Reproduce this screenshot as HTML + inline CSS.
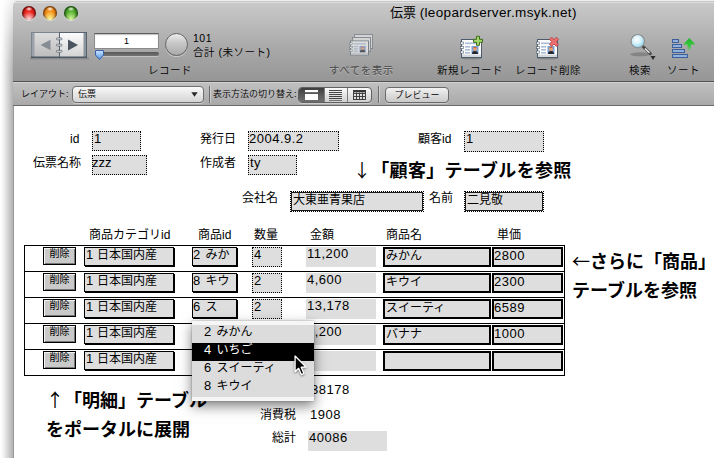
<!DOCTYPE html>
<html lang="ja">
<head>
<meta charset="utf-8">
<title>伝票 (leopardserver.msyk.net)</title>
<style>
html,body{margin:0;padding:0;}
body{width:714px;height:458px;overflow:hidden;background:#fff;position:relative;
  font-family:"Liberation Sans","Noto Sans CJK JP",sans-serif;color:#000;}
.a{position:absolute;white-space:nowrap;}
/* window shadow on left */
#shadowL{left:0;top:0;width:14px;height:458px;
  background:linear-gradient(to right,#ffffff 0%,#fafafa 15%,#e4e4e4 40%,#cdcdcd 65%,#b3b3b3 90%,#a2a2a2 100%);}
#win{left:13px;top:1px;width:720px;height:470px;border-radius:5px 0 0 0;background:#fff;overflow:hidden;}
#tbar{left:0;top:0;width:720px;height:80px;
  background:linear-gradient(to bottom,#c9c9c9 0%,#bcbcbc 25%,#a8a8a8 60%,#969696 100%);
  border-top:1px solid #c6c6c6;box-shadow:inset 0 1px 0 #dedede;box-sizing:border-box;}
#tline{left:0;top:80px;width:720px;height:1px;background:#515151;}
#lbar{left:0;top:81px;width:720px;height:23px;
  background:linear-gradient(to bottom,#c0c0c0 0%,#a9a9a9 100%);border-top:1px solid #d2d2d2;box-sizing:border-box;}
#lline{left:0;top:104px;width:720px;height:1px;background:#6a6a6a;}
#winL{left:13px;top:106px;width:1px;height:352px;background:#9a9a9a;}
#shadowT{left:0;top:0;width:14px;height:70px;background:linear-gradient(to bottom,rgba(255,255,255,.85) 0%,rgba(255,255,255,.6) 25%,rgba(255,255,255,.3) 55%,rgba(255,255,255,0) 100%);}
.tl{width:14px;height:14px;border-radius:50%;top:6px;box-sizing:border-box;}
.ui{font-size:10.5px;line-height:14px;letter-spacing:0.5px;font-weight:350;}
.lab{font-size:12px;line-height:16px;}
.fld{box-sizing:border-box;background:#dedede;font-size:13px;line-height:14px;overflow:hidden;letter-spacing:0.5px;}
.jp{font-size:12px;letter-spacing:0;word-spacing:2px;line-height:13px;}
.jp b{font-weight:normal;font-size:13px;}
.dot{border:1px dotted #000;}
.thk{border:2px solid #000;padding:1px 0 0 1px;}
.thd{border:1px solid #1a1a1a;outline:1px dotted #000;margin:1px;padding:1px 0 0 1px;}
.shd{border:1px solid #000;box-shadow:1px 1px 0 #000;}
.ar{font-weight:normal;font-family:"Noto Sans CJK JP",sans-serif;}
.big{font-size:18px;line-height:24px;font-weight:bold;}
.btn{box-sizing:border-box;background:#c9c9c9;border:1px solid #000;font-size:10px;line-height:11px;text-align:center;
  box-shadow:inset 1px 1px 0 #f4f4f4,inset -1px -1px 0 #777;}
.row{left:24px;width:541px;height:27px;box-sizing:border-box;border:1px solid #000;}
</style>
</head>
<body>
<div class="a" style="left:13px;top:0;width:8px;height:8px;background:#e9e9e9;"></div>
<div class="a" style="left:18px;top:0;width:696px;height:1px;background:#efefef;"></div>
<div class="a" id="shadowL"></div>
<div class="a" id="shadowT"></div>
<div class="a" id="win">
  <div class="a" id="tbar"></div>
  <div class="a" id="tline"></div>
  <div class="a" id="lbar"></div>
  <div class="a" id="lline"></div>
</div>
<div class="a" id="winL"></div>

<!-- traffic lights -->
<div class="a tl" style="left:22px;background:radial-gradient(ellipse 24% 15% at 50% 21%,rgba(255,255,255,0.95),rgba(255,255,255,0)),radial-gradient(ellipse 55% 50% at 50% 92%,#ffc8c8 0%,#ffc8c8 12%,rgba(255,170,170,0) 100%),radial-gradient(circle closest-side at 50% 50%,#f6352f 0%,#e3221e 58%,#8d0f0c 86%,#4e0604 100%);box-shadow:0 1px 0 rgba(255,255,255,.5);"></div>
<div class="a tl" style="left:43px;background:radial-gradient(ellipse 24% 15% at 50% 21%,rgba(255,255,255,0.95),rgba(255,255,255,0)),radial-gradient(ellipse 55% 50% at 50% 92%,#fff28c 0%,#fff28c 12%,rgba(255,230,120,0) 100%),radial-gradient(circle closest-side at 50% 50%,#f8a32a 0%,#ee8d1a 58%,#9a4f0a 86%,#5a2c04 100%);box-shadow:0 1px 0 rgba(255,255,255,.5);"></div>
<div class="a tl" style="left:64px;background:radial-gradient(ellipse 24% 15% at 50% 21%,rgba(255,255,255,0.9),rgba(255,255,255,0)),radial-gradient(ellipse 55% 50% at 50% 92%,#ccf290 0%,#ccf290 12%,rgba(190,240,130,0) 100%),radial-gradient(circle closest-side at 50% 50%,#6bbf43 0%,#52a52e 58%,#246612 86%,#0f3a06 100%);box-shadow:0 1px 0 rgba(255,255,255,.5);"></div>

<!-- title -->
<div class="a" style="left:390px;top:4px;font-size:13px;line-height:18px;">伝票 <span style="font-size:13.5px;letter-spacing:0.36px;">(leopardserver.msyk.net)</span></div>


<!-- book nav -->
<svg class="a" style="left:30px;top:31px" width="59" height="30" viewBox="0 0 59 30">
  <defs>
    <linearGradient id="pgL" x1="0" y1="0" x2="0" y2="1"><stop offset="0" stop-color="#dedede"/><stop offset="1" stop-color="#bcbcbc"/></linearGradient>
    <linearGradient id="pgR" x1="0" y1="0" x2="0" y2="1"><stop offset="0" stop-color="#fdfdfd"/><stop offset="1" stop-color="#d2d2d2"/></linearGradient>
  </defs>
  <rect x="0" y="26.5" width="59" height="2" fill="#555" opacity="0.3"/>
  <rect x="1.5" y="1.5" width="28" height="25" fill="url(#pgL)" stroke="#7d858d" stroke-width="1"/>
  <rect x="29.5" y="1.5" width="27" height="25" fill="url(#pgR)" stroke="#56626e" stroke-width="1"/>
  <rect x="2" y="2" width="2.5" height="24" fill="#9aa1a8"/>
  <rect x="53.5" y="2" width="2.5" height="24" fill="#8b949d"/>
  <rect x="1" y="25.5" width="56" height="1.5" fill="#4c5965"/>
  <path d="M10.5 14 L20.5 8.8 L20.5 19.2 Z" fill="#858c93"/>
  <path d="M48 14 L38 8.5 L38 19.5 Z" fill="#4a5560"/>
  <rect x="26.5" y="7" width="5.5" height="1.8" rx="0.6" fill="#f0f0f0" stroke="#4d5862" stroke-width="0.7"/>
  <rect x="26.5" y="13.2" width="5.5" height="1.8" rx="0.6" fill="#f0f0f0" stroke="#4d5862" stroke-width="0.7"/>
  <rect x="26.5" y="19.4" width="5.5" height="1.8" rx="0.6" fill="#f0f0f0" stroke="#4d5862" stroke-width="0.7"/>
</svg>

<!-- record number field -->
<div class="a" style="left:94px;top:33px;width:65px;height:16px;box-sizing:border-box;background:#fff;border:1px solid #8b8b8b;border-top-color:#5e5e5e;box-shadow:inset 0 1px 1px rgba(0,0,0,.25);font-size:9px;font-weight:350;line-height:14px;text-align:center;">1</div>
<!-- slider -->
<div class="a" style="left:98px;top:52px;width:61px;height:4px;border-radius:2px;background:linear-gradient(to bottom,#585858,#747474);box-shadow:0 1px 0 rgba(255,255,255,.35);"></div>
<svg class="a" style="left:94px;top:49px" width="11" height="12" viewBox="0 0 11 12">
  <defs><linearGradient id="thb" x1="0" y1="0" x2="0" y2="1"><stop offset="0" stop-color="#cfe6ff"/><stop offset="1" stop-color="#4f96ea"/></linearGradient></defs>
  <path d="M1.5 1.5 H9.5 V6 L5.5 10.5 L1.5 6 Z" fill="url(#thb)" stroke="#3b5fa8" stroke-width="1" stroke-linejoin="round"/>
</svg>
<!-- circle -->
<div class="a" style="left:165px;top:33px;width:23px;height:23px;border-radius:50%;box-sizing:border-box;border:1px solid #636363;background:linear-gradient(to bottom,#ededed 0%,#c9c9c9 40%,#aaaaaa 100%);box-shadow:0 1px 0 rgba(255,255,255,.4);"></div>
<div class="a ui" style="left:193px;top:31px;">101</div>
<div class="a ui" style="left:193px;top:45px;">合計 (未ソート)</div>
<div class="a ui" style="left:148px;top:63px;">レコード</div>

<div class="a ui" style="left:329px;top:63px;color:#484848;font-weight:400;text-shadow:0 1px 0 rgba(255,255,255,.3);">すべてを表示</div>
<div class="a ui" style="left:437px;top:63px;">新規レコード</div>
<div class="a ui" style="left:515px;top:63px;">レコード削除</div>
<div class="a ui" style="left:629px;top:63px;">検索</div>
<div class="a ui" style="left:667px;top:63px;">ソート</div>


<!-- layout bar -->
<div class="a" style="left:21px;top:88px;font-size:9px;font-weight:350;line-height:13px;">レイアウト:</div>
<div class="a" style="left:72px;top:86px;width:132px;height:17px;box-sizing:border-box;border:1px solid #6f6f6f;border-radius:4px;background:linear-gradient(to bottom,#fafafa 0%,#e6e6e6 50%,#d4d4d4 100%);box-shadow:0 1px 0 rgba(255,255,255,.4);font-size:9px;font-weight:350;line-height:15px;padding-left:5px;">伝票</div>
<svg class="a" style="left:191px;top:92px" width="7" height="5" viewBox="0 0 7 5"><path d="M0.3 0.3 H6.7 L3.5 4.8 Z" fill="#2a2a2a"/></svg>
<div class="a" style="left:209px;top:86px;width:1px;height:17px;background:#6c6c6c;box-shadow:1px 0 0 rgba(255,255,255,.35);"></div>
<div class="a" style="left:213px;top:88px;font-size:9px;font-weight:350;line-height:13px;">表示方法の切り替え:</div>
<div class="a" style="left:298px;top:87px;width:74px;height:16px;box-sizing:border-box;border:1px solid #5f5f5f;border-radius:4px;background:linear-gradient(to bottom,#fbfbfb 0%,#e4e4e4 50%,#d0d0d0 100%);box-shadow:0 1px 0 rgba(255,255,255,.4);overflow:hidden;">
  <div class="a" style="left:0;top:0;width:25px;height:14px;background:linear-gradient(to bottom,#3c3c3c 0%,#5e5e5e 60%,#6e6e6e 100%);"></div>
  <div class="a" style="left:25px;top:0;width:1px;height:14px;background:#7c7c7c;"></div>
  <div class="a" style="left:48px;top:0;width:1px;height:14px;background:#7c7c7c;"></div>
</div>
<svg class="a" style="left:298px;top:87px" width="74" height="16" viewBox="0 0 74 16">
  <rect x="7" y="3" width="13" height="10" fill="#fff"/>
  <rect x="7" y="5.4" width="13" height="1.3" fill="#111"/>
  <g fill="#333"><rect x="31" y="3" width="13" height="0.9"/><rect x="31" y="5" width="13" height="0.9"/><rect x="31" y="7" width="13" height="0.9"/><rect x="31" y="9" width="13" height="0.9"/><rect x="31" y="11" width="13" height="0.9"/><rect x="31" y="13" width="13" height="0.6"/></g>
  <g fill="none" stroke="#333" stroke-width="0.9"><rect x="55.5" y="3.5" width="12" height="9"/><path d="M55.5 6.5 H67.5 M55.5 9.5 H67.5 M58.5 5.5 V12.5 M61.5 5.5 V12.5 M64.5 5.5 V12.5"/></g>
  <rect x="55.5" y="3.5" width="12" height="1.8" fill="#333"/>
</svg>
<div class="a" style="left:378px;top:86px;width:1px;height:17px;background:#6c6c6c;box-shadow:1px 0 0 rgba(255,255,255,.35);"></div>
<div class="a" style="left:385px;top:87px;width:64px;height:16px;box-sizing:border-box;border:1px solid #6a6a6a;border-radius:4px;background:linear-gradient(to bottom,#f2f2f2 0%,#dcdcdc 50%,#cacaca 100%);box-shadow:0 1px 0 rgba(255,255,255,.4);font-size:9px;font-weight:350;line-height:14px;text-align:center;">プレビュー</div>


<!-- content labels/fields -->
<div class="a lab" style="left:70px;top:131px;">id</div>
<div class="a fld dot" style="left:92px;top:131px;width:49px;height:20px;padding-left:1px;">1</div>
<div class="a lab" style="left:33px;top:155px;">伝票名称</div>
<div class="a fld dot" style="left:92px;top:155px;width:55px;height:20px;padding-left:0;text-indent:-1px;letter-spacing:0;">zzz</div>

<div class="a lab" style="left:200px;top:131px;">発行日</div>
<div class="a fld dot" style="left:248px;top:131px;width:91px;height:20px;padding-left:0;">2004.9.2</div>
<div class="a lab" style="left:200px;top:155px;">作成者</div>
<div class="a fld dot" style="left:248px;top:155px;width:49px;height:20px;padding-left:1px;">ty</div>

<div class="a lab" style="left:418px;top:131px;">顧客id</div>
<div class="a fld dot" style="left:464px;top:131px;width:80px;height:21px;padding-left:1px;">1</div>

<div class="a big" style="left:353px;top:157px;letter-spacing:0.3px;"><span class="ar">↓</span>「顧客」テーブルを参照</div>

<div class="a lab" style="left:242px;top:190px;">会社名</div>
<div class="a fld thd jp" style="left:290px;top:191px;width:132px;height:19px;">大東亜青果店</div>
<div class="a lab" style="left:429px;top:190px;">名前</div>
<div class="a fld thd jp" style="left:464px;top:191px;width:78px;height:19px;">二見敬</div>

<div class="a lab" style="left:89px;top:227px;">商品カテゴリid</div>
<div class="a lab" style="left:198px;top:227px;">商品id</div>
<div class="a lab" style="left:254px;top:227px;">数量</div>
<div class="a lab" style="left:310px;top:227px;">金額</div>
<div class="a lab" style="left:386px;top:227px;">商品名</div>
<div class="a lab" style="left:497px;top:227px;">単価</div>

<div class="a row" style="top:245px;"></div>
<div class="a btn" style="left:43px;top:247px;width:33px;height:18px;">削除</div>
<div class="a fld shd jp" style="left:84px;top:247px;width:90px;height:19px;padding-left:1px;word-spacing:0.5px;"><b>1</b> 日本国内産</div>
<div class="a fld shd jp" style="left:192px;top:247px;width:45px;height:19px;padding-left:0px;"><b>2</b> みか</div>
<div class="a fld dot" style="left:252px;top:247px;width:30px;height:20px;padding-left:1px;">4</div>
<div class="a fld" style="left:306px;top:247px;width:70px;height:20px;padding-left:1px;">11,200</div>
<div class="a fld thk jp" style="left:383px;top:247px;width:108px;height:20px;">みかん</div>
<div class="a fld thk" style="left:492px;top:247px;width:71px;height:20px;padding:0;">2800</div>
<div class="a row" style="top:271px;"></div>
<div class="a btn" style="left:43px;top:273px;width:33px;height:18px;">削除</div>
<div class="a fld shd jp" style="left:84px;top:273px;width:90px;height:19px;padding-left:1px;word-spacing:0.5px;"><b>1</b> 日本国内産</div>
<div class="a fld shd jp" style="left:192px;top:273px;width:45px;height:19px;padding-left:0px;"><b>8</b> キウ</div>
<div class="a fld dot" style="left:252px;top:273px;width:30px;height:20px;padding-left:1px;">2</div>
<div class="a fld" style="left:306px;top:273px;width:70px;height:20px;padding-left:1px;">4,600</div>
<div class="a fld thk jp" style="left:383px;top:273px;width:108px;height:20px;">キウイ</div>
<div class="a fld thk" style="left:492px;top:273px;width:71px;height:20px;padding:0;">2300</div>
<div class="a row" style="top:297px;"></div>
<div class="a btn" style="left:43px;top:299px;width:33px;height:18px;">削除</div>
<div class="a fld shd jp" style="left:84px;top:299px;width:90px;height:19px;padding-left:1px;word-spacing:0.5px;"><b>1</b> 日本国内産</div>
<div class="a fld shd jp" style="left:192px;top:299px;width:45px;height:19px;padding-left:0px;"><b>6</b> ス</div>
<div class="a fld dot" style="left:252px;top:299px;width:30px;height:20px;padding-left:1px;">2</div>
<div class="a fld" style="left:306px;top:299px;width:70px;height:20px;padding-left:1px;">13,178</div>
<div class="a fld thk jp" style="left:383px;top:299px;width:108px;height:20px;">スイーティ</div>
<div class="a fld thk" style="left:492px;top:299px;width:71px;height:20px;padding:0;">6589</div>
<div class="a row" style="top:323px;"></div>
<div class="a btn" style="left:43px;top:325px;width:33px;height:18px;">削除</div>
<div class="a fld shd jp" style="left:84px;top:325px;width:90px;height:19px;padding-left:1px;word-spacing:0.5px;"><b>1</b> 日本国内産</div>
<div class="a fld" style="left:306px;top:325px;width:70px;height:20px;padding-left:1px;">1,200</div>
<div class="a fld thk jp" style="left:383px;top:325px;width:108px;height:20px;">バナナ</div>
<div class="a fld thk" style="left:492px;top:325px;width:71px;height:20px;padding:0;">1000</div>
<div class="a row" style="top:349px;"></div>
<div class="a btn" style="left:43px;top:351px;width:33px;height:18px;">削除</div>
<div class="a fld shd jp" style="left:84px;top:351px;width:90px;height:19px;padding-left:1px;word-spacing:0.5px;"><b>1</b> 日本国内産</div>
<div class="a fld" style="left:306px;top:351px;width:70px;height:20px;padding-left:1px;"></div>
<div class="a fld thk jp" style="left:383px;top:351px;width:108px;height:20px;"></div>
<div class="a fld thk" style="left:492px;top:351px;width:71px;height:20px;padding:0;"></div>


<div class="a big" style="left:572px;top:248px;"><span class="ar">←</span>さらに「商品」</div>
<div class="a big" style="left:572px;top:279px;">テーブルを参照</div>
<div class="a big" style="left:46px;top:387px;"><span class="ar">↑</span>「明細」テーブル</div>
<div class="a big" style="left:46px;top:418px;">をポータルに展開</div>

<div class="a fld" style="left:310px;top:383px;width:70px;height:18px;background:none;padding-left:1px;">38178</div>
<div class="a lab" style="left:260px;top:407px;">消費税</div>
<div class="a fld" style="left:309px;top:408px;width:70px;height:18px;background:none;padding-left:1px;">1908</div>
<div class="a lab" style="left:272px;top:430px;">総計</div>
<div class="a fld" style="left:308px;top:431px;width:79px;height:20px;padding-left:1px;">40086</div>

<!-- popup -->
<div class="a jp" style="left:192px;top:321px;width:122px;height:80px;background:#dcdcdc;box-shadow:0 5px 12px rgba(0,0,0,.5),0 0 2px rgba(0,0,0,.3);border-top:4px solid #f6f6f6;border-bottom:4px solid #f6f6f6;box-sizing:border-box;font-size:12px;line-height:14px;">
  <div style="padding-left:12px;height:18px;"><b>2</b> みかん</div>
  <div style="padding-left:12px;height:18px;background:#000;color:#fff;"><b>4</b> いちご</div>
  <div style="padding-left:12px;height:18px;"><b>6</b> スイーティ</div>
  <div style="padding-left:12px;height:18px;"><b>8</b> キウイ</div>
</div>
<svg class="a" style="left:294px;top:355px;filter:drop-shadow(0 1px 1px rgba(0,0,0,.45));" width="14" height="21.5" viewBox="0 0 13 20">
  <path d="M1 1 L1 15.5 L4.3 12.4 L6.8 18.2 L9.2 17.2 L6.7 11.4 L11.2 11.2 Z" fill="#000" stroke="#fff" stroke-width="1.2" stroke-linejoin="round"/>
</svg>


<!-- toolbar icons -->
<svg class="a" style="left:346px;top:30px" width="32" height="30" viewBox="0 0 32 30" opacity="0.62">
  <rect x="8.5" y="4.5" width="18" height="14" fill="#e9e9e9" stroke="#6d7782" stroke-width="1"/>
  <rect x="6.5" y="7.5" width="18" height="14" fill="#ececec" stroke="#6d7782" stroke-width="1"/>
  <g transform="translate(4,10.5) scale(0.9,0.78)"><g transform="translate(0,0)" opacity="1.0">
  <rect x="0.5" y="0.5" width="20" height="18" fill="#fdfdfd" stroke="#4b5b6b" stroke-width="1"/>
  <rect x="1" y="15.5" width="19" height="2.5" fill="#d4d8dc"/>
  <rect x="-0.5" y="3" width="3" height="2.2" fill="#fff" stroke="#4b5b6b" stroke-width="0.6"/>
  <rect x="-0.5" y="7.5" width="3" height="2.2" fill="#fff" stroke="#4b5b6b" stroke-width="0.6"/>
  <rect x="-0.5" y="12" width="3" height="2.2" fill="#fff" stroke="#4b5b6b" stroke-width="0.6"/>
  <rect x="4" y="3.5" width="14" height="1.6" fill="#a9bcd8"/>
  <rect x="4" y="7" width="5" height="1.6" fill="#a9bcd8"/>
  <rect x="4" y="10" width="5" height="1.6" fill="#a9bcd8"/>
  <rect x="4" y="13" width="5" height="1.6" fill="#a9bcd8"/>
  <rect x="10.5" y="7" width="7" height="8" fill="#7da0d6"/>
  <circle cx="14" cy="10" r="2" fill="#e9a06a"/>
  <path d="M12 9.3 Q14 6.6 16 9.3 Q14 8.3 12 9.3 Z" fill="#c4511f"/>
  <path d="M11 15 Q11 12 14 12 Q17 12 17 15 Z" fill="#23262c"/>
</g></g>
</svg>
<svg class="a" style="left:456px;top:30px" width="32" height="30" viewBox="0 0 32 30">
  <ellipse cx="15.5" cy="28.3" rx="11" ry="1.2" fill="#000" opacity="0.18"/>
  <g transform="translate(5,9)" opacity="1.0">
  <rect x="0.5" y="0.5" width="20" height="18" fill="#fdfdfd" stroke="#4b5b6b" stroke-width="1"/>
  <rect x="1" y="15.5" width="19" height="2.5" fill="#d4d8dc"/>
  <rect x="-0.5" y="3" width="3" height="2.2" fill="#fff" stroke="#4b5b6b" stroke-width="0.6"/>
  <rect x="-0.5" y="7.5" width="3" height="2.2" fill="#fff" stroke="#4b5b6b" stroke-width="0.6"/>
  <rect x="-0.5" y="12" width="3" height="2.2" fill="#fff" stroke="#4b5b6b" stroke-width="0.6"/>
  <rect x="4" y="3.5" width="14" height="1.6" fill="#a9bcd8"/>
  <rect x="4" y="7" width="5" height="1.6" fill="#a9bcd8"/>
  <rect x="4" y="10" width="5" height="1.6" fill="#a9bcd8"/>
  <rect x="4" y="13" width="5" height="1.6" fill="#a9bcd8"/>
  <rect x="10.5" y="7" width="7" height="8" fill="#7da0d6"/>
  <circle cx="14" cy="10" r="2" fill="#e9a06a"/>
  <path d="M12 9.3 Q14 6.6 16 9.3 Q14 8.3 12 9.3 Z" fill="#c4511f"/>
  <path d="M11 15 Q11 12 14 12 Q17 12 17 15 Z" fill="#23262c"/>
</g>
  <path d="M20.5 6.3 V9.3 H17.5 V12.3 H20.5 V15.3 H23.5 V12.3 H26.5 V9.3 H23.5 V6.3 Z" fill="#a5d66c" stroke="#3d6f1b" stroke-width="1" stroke-linejoin="round"/>
</svg>
<svg class="a" style="left:532px;top:30px" width="32" height="30" viewBox="0 0 32 30">
  <ellipse cx="15.5" cy="28.3" rx="11" ry="1.2" fill="#000" opacity="0.18"/>
  <g transform="translate(5,9)" opacity="1.0">
  <rect x="0.5" y="0.5" width="20" height="18" fill="#fdfdfd" stroke="#4b5b6b" stroke-width="1"/>
  <rect x="1" y="15.5" width="19" height="2.5" fill="#d4d8dc"/>
  <rect x="-0.5" y="3" width="3" height="2.2" fill="#fff" stroke="#4b5b6b" stroke-width="0.6"/>
  <rect x="-0.5" y="7.5" width="3" height="2.2" fill="#fff" stroke="#4b5b6b" stroke-width="0.6"/>
  <rect x="-0.5" y="12" width="3" height="2.2" fill="#fff" stroke="#4b5b6b" stroke-width="0.6"/>
  <rect x="4" y="3.5" width="14" height="1.6" fill="#a9bcd8"/>
  <rect x="4" y="7" width="5" height="1.6" fill="#a9bcd8"/>
  <rect x="4" y="10" width="5" height="1.6" fill="#a9bcd8"/>
  <rect x="4" y="13" width="5" height="1.6" fill="#a9bcd8"/>
  <rect x="10.5" y="7" width="7" height="8" fill="#7da0d6"/>
  <circle cx="14" cy="10" r="2" fill="#e9a06a"/>
  <path d="M12 9.3 Q14 6.6 16 9.3 Q14 8.3 12 9.3 Z" fill="#c4511f"/>
  <path d="M11 15 Q11 12 14 12 Q17 12 17 15 Z" fill="#23262c"/>
</g>
  <path d="M17.4 9.4 L19.6 7.2 L22 9.6 L24.4 7.2 L26.6 9.4 L24.2 11.8 L26.6 14.2 L24.4 16.4 L22 14 L19.6 16.4 L17.4 14.2 L19.8 11.8 Z" fill="#ec6f6f" stroke="#b23a3a" stroke-width="0.8" stroke-linejoin="round"/>
</svg>
<svg class="a" style="left:626px;top:30px" width="34" height="32" viewBox="0 0 34 32">
  <defs><radialGradient id="lens" cx="0.42" cy="0.38" r="0.75"><stop offset="0" stop-color="#ffffff"/><stop offset="0.45" stop-color="#d2f0fa"/><stop offset="1" stop-color="#6fc4e6"/></radialGradient></defs>
  <ellipse cx="14" cy="24.3" rx="10" ry="2" fill="#000" opacity="0.2"/>
  <path d="M17 16.5 L24.3 23.6" stroke="#4a4a4a" stroke-width="3" stroke-linecap="round"/>
  <path d="M19.3 18.9 L23 22.4" stroke="#dcdcdc" stroke-width="1.5" stroke-linecap="round"/>
  <circle cx="11.8" cy="11.2" r="6.7" fill="url(#lens)" stroke="#8e8e8e" stroke-width="1.2"/>
  <path d="M24.5 26 H29.5 L27 30 Z" fill="#2a2a2a"/>
</svg>
<svg class="a" style="left:668px;top:34px" width="30" height="26" viewBox="0 0 30 26">
  <defs><linearGradient id="gar" x1="0" y1="0" x2="0" y2="1"><stop offset="0" stop-color="#23b52a"/><stop offset="0.6" stop-color="#35c83c"/><stop offset="1" stop-color="#35c83c" stop-opacity="0"/></linearGradient></defs>
  <g fill="#8fb0dc" stroke="#3f5f9a" stroke-width="1">
    <rect x="4.5" y="5.5" width="6" height="3"/>
    <rect x="4.5" y="10.5" width="9" height="3"/>
    <rect x="4.5" y="15.5" width="12" height="3"/>
    <rect x="4.5" y="20.5" width="15" height="3"/>
  </g>
  <path d="M21.3 4 L15.2 10.5 H19.5 V17 H23 V10.5 H27.4 Z" fill="url(#gar)"/>
</svg>

</body>
</html>
